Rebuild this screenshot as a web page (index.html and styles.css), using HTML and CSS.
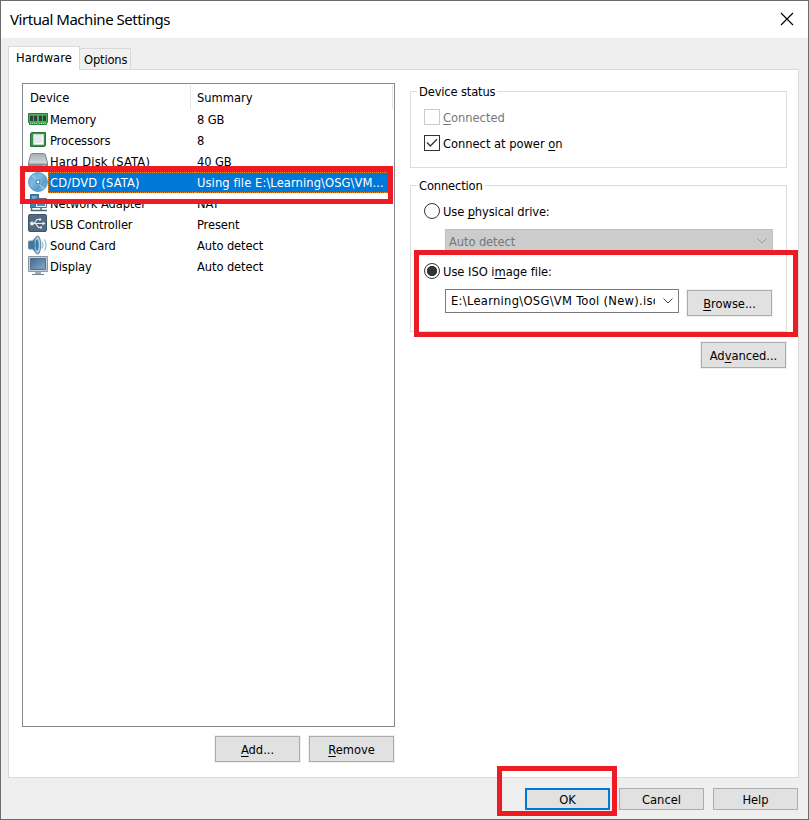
FILE: index.html
```html
<!DOCTYPE html>
<html lang="en">
<head>
<meta charset="utf-8">
<title>Virtual Machine Settings</title>
<link rel="stylesheet" href="styles.css">
</head>
<body>
<div class="window">
  <header class="titlebar">
    <h1>Virtual Machine Settings</h1>
    <svg class="close" width="14" height="14" viewBox="0 0 14 14"><path d="M1 1L13 13M13 1L1 13" stroke="#000" stroke-width="1.15"/></svg>
  </header>
  <nav class="tabs"><div class="tab active">Hardware</div><div class="tab">Options</div></nav>
  <main class="panel">
    <section class="left">
      <div class="list">
        <div class="head"><span class="device">Device</span><span class="summary">Summary</span></div>
        <div class="row">
          <svg width="20" height="20" viewBox="0 0 20 20"><path d="M.5 4.5h19v9h-1v2h-8v-1h-1v1h-8v-2h-1z" fill="#4caf5c" stroke="#237a36"/><path d="M2 14.5h7M11 14.5h7" stroke="#c9d98a" stroke-dasharray="1 1"/><path d="M2 6h3v6H2zM6 6h3v6H6zM11 6h3v6h-3zM15 6h3v6h-3z" fill="#343c3c"/><path d="M2 6.5h3M6 6.5h3M11 6.5h3M15 6.5h3" stroke="#687070"/></svg>
          <span class="name">Memory</span><span>8 GB</span></div>
        <div class="row">
          <svg width="20" height="20" viewBox="0 0 20 20"><path d="M2.5 3.5l1-1h14v13l-1 1h-14z" fill="#36944c" stroke="#227737"/><path d="M5.5 4.5h10v10h-10z" fill="#e8e9e8" stroke="#c4dcc8"/><path d="M7 13.5h7.500V6" fill="none" stroke="#fff"/></svg>
          <span class="name">Processors</span><span>8</span></div>
        <div class="row">
          <svg width="20" height="20" viewBox="0 0 20 20"><defs><linearGradient id="disk" x2="0" y2="1"><stop stop-color="#a5adb5"/><stop offset="1" stop-color="#e8ecef"/></linearGradient></defs><path d="M4.500 2.500h11q1.500 0 2 1.500l2 8v4q0 1.500-1.500 1.500h-16Q.5 17.500.5 16v-4l2-8q.5-1.500 2-1.500z" fill="url(#disk)" stroke="#7b838c"/><path d="M1 12.500h18V17H1z" fill="#858d96"/><path d="M15 15h2" stroke="#dce8ee"/></svg>
          <span class="name sata">Hard Disk (SATA)</span><span>40 GB</span></div>
        <div class="row selected">
          <svg width="20" height="20" viewBox="0 0 20 20"><defs><linearGradient id="disc" x2="1" y2="1"><stop stop-color="#5d9fd0"/><stop offset=".4" stop-color="#80b9df"/><stop offset=".65" stop-color="#5b9fd0"/><stop offset="1" stop-color="#76b2da"/></linearGradient></defs><circle cx="10" cy="10" r="9.400" fill="url(#disc)" stroke="#5797c6"/><path d="M10 10L3 4l3-2zM10 10l7 6-3 2z" fill="#a9d5ee" opacity=".55"/><circle cx="10" cy="10" r="3" fill="#4d8fc0" stroke="#79b2d7"/><circle cx="10" cy="10" r="1.200" fill="#fff"/></svg>
          <span class="name sata">CD/DVD (SATA)</span><span class="value">Using file E:\Learning\OSG\VM...</span></div>
        <div class="row">
          <svg width="20" height="20" viewBox="0 0 20 20"><path d="M2.500 1.500h8v13h-8z" fill="#3d83b4" stroke="#286b9d"/><path d="M4 4h5M4 6h5" stroke="#abd0e6"/><path d="M7.500 5.500h11v9h-11z" fill="#eaf3f9" stroke="#5d6d7b"/><path d="M9 7h8v6H9z" fill="#438fc6"/><path d="M8 17.500h11M13 14v3M3.500 14v3.500H9" fill="none" stroke="#4e687a" stroke-width="1.500"/></svg>
          <span class="name">Network Adapter</span><span>NAT</span></div>
        <div class="row">
          <svg width="20" height="20" viewBox="0 0 20 20"><rect x=".5" y=".5" width="18" height="17" rx="1.500" fill="#536a7f" stroke="#425568"/><path d="M3.500 9.500h12M6 9.500l3-4h3M7.500 9.500l3 4h3" fill="none" stroke="#e5edf2" stroke-width="1.200"/><circle cx="4" cy="9.500" r="2" fill="#e5edf2"/><path d="M14.500 7.500l3 2-3 2z" fill="#e5edf2"/><circle cx="12" cy="5.500" r="1.200" fill="#e5edf2"/><path d="M12 12.500h2v2h-2z" fill="#e5edf2"/></svg>
          <span class="name">USB Controller</span><span>Present</span></div>
        <div class="row">
          <svg width="20" height="20" viewBox="0 0 20 20"><path d="M.5 7q0-1 1-1h3L9 1.500q2-1 2 1v15q0 2-2 1L4.500 14h-3q-1 0-1-1z" fill="#317dad" stroke="#758692"/><ellipse cx="9.500" cy="10" rx="3.300" ry="8.800" fill="#a9d2ea" stroke="#657c8d"/><ellipse cx="9" cy="10" rx="1.700" ry="5.800" fill="#347fb4"/><path d="M14 6.500q2 3.500 0 7M16.500 4.500q3 5.500 0 11" fill="none" stroke="#8abbd9" stroke-width="1.200"/></svg>
          <span class="name">Sound Card</span><span>Auto detect</span></div>
        <div class="row">
          <svg width="20" height="20" viewBox="0 0 20 20"><defs><linearGradient id="screen" x2="1" y2="1"><stop stop-color="#426a92"/><stop offset="1" stop-color="#86a9ca"/></linearGradient></defs><path d="M.5 .5h19v15H.5z" fill="#c6d0d9" stroke="#8998a4"/><path d="M2.500 2.500h15v11h-15z" fill="url(#screen)" stroke="#53718e"/><path d="M7 16h6v2H7z" fill="#a3adb5"/><path d="M4 18.500h12" stroke="#737f88"/></svg>
          <span class="name">Display</span><span>Auto detect</span></div>
      </div>
      <div class="actions"><button><u>A</u>dd...</button><button><u>R</u>emove</button></div>
    </section>
    <section class="right">
      <fieldset class="status"><legend>Device status</legend>
        <div class="option disabled"><i class="check"></i><span><u>C</u>onnected</span></div>
        <div class="option"><i class="check"><svg width="14" height="14" viewBox="0 0 14 14"><path d="M2 6.500L5.300 10 12 3.200" fill="none" stroke="#333" stroke-width="1.300"/></svg></i><span>Connect at power <u>o</u>n</span></div>
      </fieldset>
      <fieldset class="connection"><legend>Connection</legend>
        <div class="option"><i class="radio"></i><span class="tight">Use <u>p</u>hysical drive:</span></div>
        <div class="combo off"><span>Auto detect</span><svg width="10" height="6" viewBox="0 0 10 6"><path d="M.5.5L5 5 9.500.5" fill="none" stroke="#999"/></svg></div>
        <div class="option iso"><i class="radio on"></i><span>Use ISO i<u>m</u>age file:</span></div>
        <div class="pick"><div class="combo"><span class="path">E:\Learning\OSG\VM Tool (New).iso</span><svg width="10" height="6" viewBox="0 0 10 6"><path d="M.5.5L5 5 9.500.5" fill="none" stroke="#444"/></svg></div><button><u>B</u>rowse...</button></div>
      </fieldset>
      <button class="advanced">Ad<u>v</u>anced...</button>
    </section>
  </main>
  <footer><button class="default">OK</button><button>Cancel</button><button>Help</button></footer>
</div>
<div class="mark mark-device"></div><div class="mark mark-iso"></div><div class="mark mark-ok"></div>
</body>
</html>
```
FILE: styles.css
```css
* { box-sizing: border-box; }
body { margin: 0; width: 809px; height: 820px; overflow: hidden; font: 12.8px/20px "DejaVu Sans Condensed", "DejaVu Sans", sans-serif; font-stretch: condensed; letter-spacing: -.03px; color: #000; }
.window { width: 809px; height: 820px; border: 1px solid #6b6b70; background: #efefef; display: flex; flex-direction: column; }
.titlebar { height: 37px; flex: none; background: #fff; display: flex; align-items: center; justify-content: space-between; padding: 0 14px 0 9px; }
h1 { margin: 0 0 2px; font: 15px/20px "Noto Sans", sans-serif; letter-spacing: -.46px; }
.close { margin-bottom: 1px; }
.tabs { height: 31px; flex: none; display: flex; align-items: flex-end; padding-left: 7px; }
.tab { width: 52px; height: 21px; border: 1px solid #d9d9d9; border-bottom: 0; padding-left: 4px; line-height: 22px; background: #f0f0f0; letter-spacing: -.15px; }
.tab.active { width: 72px; height: 24px; margin: 0 -1px -1px 0; padding-left: 7px; background: #fff; position: relative; letter-spacing: .03px; }
.panel { width: 791px; height: 709px; flex: none; margin-left: 7px; border: 1px solid #d9d9d9; background: #fff; display: flex; padding: 13px 11px 0 13px; justify-content: space-between; }
.left { width: 373px; }
.list { height: 644px; border: 1px solid #828790; padding-top: 1px; }
.head { height: 24px; display: flex; line-height: 25px; border-right: 1px solid #e5e5e5; margin-right: 1px; }
.device { width: 168px; padding-left: 7px; border-right: 1px solid #e5e5e5; }
.summary { padding-left: 6px; }
.row { height: 21px; display: flex; align-items: center; padding-left: 5px; white-space: nowrap; }
.row svg { flex: none; margin-bottom: 2px; }
.row span { height: 21px; line-height: 21px; padding-left: 2px; letter-spacing: -.1px; }
.row .name { width: 147px; }
.row .sata { letter-spacing: .2px; }
.row.selected span { background: #0078d7; color: #fff; border: 1px dotted #f28a28; border-width: 1px 0; line-height: 19px; }
.row.selected .name { border-left-width: 1px; padding-left: 1px; }
.row.selected .value { width: 194px; letter-spacing: .09px; }
.actions { display: flex; justify-content: flex-end; gap: 9px; padding: 9px 1px 0 0; }
button { width: 85px; height: 26px; border: 1px solid #adadad; background: #e1e1e1; padding: 1px 0 0; color: #000; font: inherit; letter-spacing: inherit; line-height: 24px; box-shadow: 0 0 0 1px #f0f0f0; }
u { text-decoration: underline; text-underline-offset: 2px; text-decoration-thickness: 1px; text-decoration-skip-ink: none; }
.right { width: 377px; padding-top: 7px; display: flex; flex-direction: column; }
fieldset { margin: 0 0 17px; border: 1px solid #dcdcdc; padding: 0; position: relative; }
legend { position: absolute; top: -10px; left: 6px; background: #fff; padding: 0 2px; line-height: 20px; letter-spacing: -.15px; }
.status { height: 77px; padding: 12px 0 0 13px; margin-top: 1px; }
.option { height: 26px; display: flex; align-items: center; gap: 3px; }
.option span { padding-top: 1px; }
.disabled { color: #777; }
.tight { letter-spacing: -.13px; }
.check, .radio { width: 16px; height: 16px; border: 1px solid #333; display: flex; }
.disabled .check { border-color: #ccc; }
.radio { border-radius: 50%; }
.radio.on { background: radial-gradient(circle, #333 4.8px, #fff 5.4px); }
.connection { height: 147px; padding: 12px 0 0 13px; }
.combo { height: 24px; border: 1px solid #7a7a7a; display: flex; align-items: center; justify-content: space-between; padding: 0 5px; white-space: nowrap; }
.combo.off { width: 328px; margin: 5px 0 0 21px; padding: 0 5px 0 3px; background: #ccc; border-color: #bfbfbf; color: #777; }
.off span { padding-top: 2px; letter-spacing: -.1px; }
.iso { margin-top: 5px; }
.pick { display: flex; gap: 8px; padding: 5px 0 0 21px; }
.pick .combo { width: 234px; }
.pick button { margin-top: 1px; }
.path { width: 204px; overflow: hidden; letter-spacing: .3px; }
.advanced { align-self: flex-end; margin: -7px 1px 0 0; }
footer { display: flex; justify-content: flex-end; gap: 9px; padding: 10px 10px 0 0; }
footer button { height: 22px; line-height: 20px; box-shadow: none; }
.default { border: 2px solid #0078d7; line-height: 18px; }
.mark { position: absolute; border: 5px solid #ed1c24; }
.mark-device { left: 20px; top: 166px; width: 373px; height: 38px; border-top-width: 6px; }
.mark-iso { left: 414px; top: 250px; width: 384px; height: 87px; }
.mark-ok { left: 497px; top: 766px; width: 120px; height: 50px; }
```
